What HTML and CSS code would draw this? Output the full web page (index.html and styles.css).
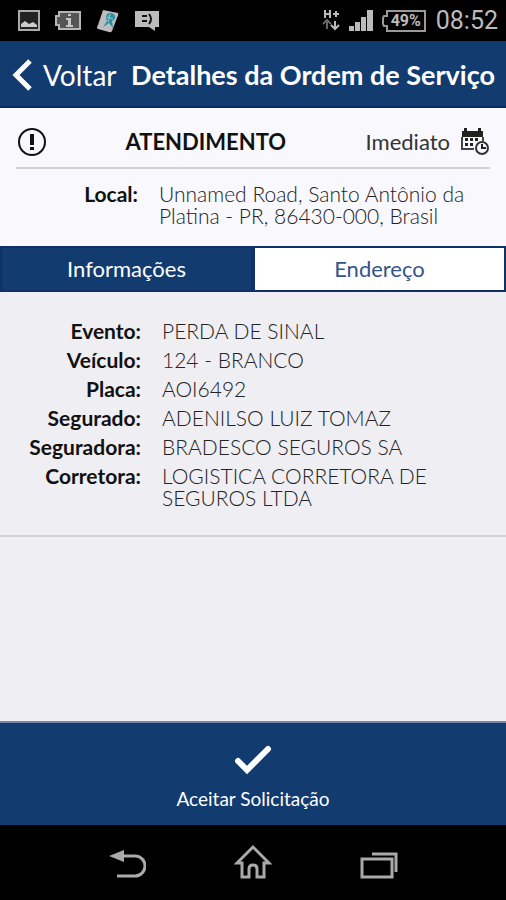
FILE: index.html
```html
<!DOCTYPE html>
<html lang="pt-BR">
<head>
    <meta charset="UTF-8">
    <meta name="viewport" content="width=device-width, initial-scale=1">
    <title>Detalhes da Ordem de Serviço</title>
    <link rel="stylesheet" href="styles.css">
</head>
<body>
    <div class="statusbar">
        <div class="notifications">
            <svg width="22" height="22" viewBox="0 0 22 22"><rect x="1" y="1" width="20" height="19" fill="#222" stroke="#aaa" stroke-width="2"/><path d="M3 17v-3l4-3 4 3 4-2 4 3v2z" fill="#ccc"/></svg>
            <svg width="28" height="22" viewBox="0 0 28 22"><path d="M5 2h21v17H5v-4H2V6h3z" fill="#555" stroke="#b5b5b5" stroke-width="2"/><path d="M14 4h3v2h-3zM12 8h5v7h2v2h-7v-2h2v-5h-2z" fill="#c4c4c4"/></svg>
            <svg width="24" height="24" viewBox="0 0 24 24"><path d="M7 1l15 3q1 2-1 5l-5 13q-1 2-3 1L2 20q-2-1 0-4z" fill="#bdbdbd"/><path d="M10 9q0-5 4-5t5 3-3 5l1 7-4-5-6 4 4-6z" fill="#2c91a5"/><path d="M11 8l6 2M14 5l-2 8" stroke="#9ccad2" fill="none"/></svg>
            <svg width="26" height="22" viewBox="0 0 26 22"><path d="M1 1h24v16h-4v4l-6-4H1z" fill="#bcbcbc"/><path d="M8 6h5M8 11h5M15 4q4 5 0 10" stroke="#111" stroke-width="2" fill="none"/></svg>
        </div>
        <div class="system">
            <svg width="20" height="24" viewBox="0 0 20 24" fill="none" stroke="#bbb" stroke-width="2"><path d="M3 1v8M8 1v8M3 5h5M11 5h6M14 2v6"/><path d="M5 20v-8M1 15l4-4 4 4" stroke="#666"/><path d="M13 12v8M9 16l4 4 4-4"/></svg>
            <svg width="26" height="24" viewBox="0 0 26 24" fill="#bbb"><path d="M1 17h5v5H1zM7 13h5v9H7zM13 8h5v14h-5zM19 1h6v21h-6z"/></svg>
            <span class="battery">
                <svg width="44" height="24" viewBox="0 0 44 24" fill="none" stroke="#999" stroke-width="2"><path d="M5 2h38v20H5v-5H2l-1-2V9l1-2h3z"/></svg>
                <span class="level">49%</span>
            </span>
            <span class="clock">08:52</span>
        </div>
    </div>

    <header class="titlebar">
        <a class="back" href="#">
            <svg width="22" height="34" viewBox="0 0 22 34" fill="none" stroke="#fff" stroke-width="5"><path d="M19 3L5 17l14 14"/></svg>
            Voltar
        </a>
        <h1>Detalhes da Ordem de Serviço</h1>
    </header>

    <main>
        <section class="summary">
            <div class="call">
                <svg width="28" height="28" viewBox="0 0 28 28"><circle cx="14" cy="14" r="13" fill="none" stroke="#111" stroke-width="2"/><path d="M12 6h4v11h-4zM12 19h4v3h-4z" fill="#111"/></svg>
                <h2>ATENDIMENTO</h2>
                <span class="when">
                    Imediato
                    <svg width="30" height="30" viewBox="0 0 30 30"><path d="M2 4h21v6H2zM4 1h3v5H4zM18 1h3v5h-3z" fill="#222"/><path d="M2 10v12h12M23 10v4" fill="none" stroke="#444" stroke-width="2"/><path d="M5 11h3v3H5zM10 11h3v3h-3zM15 11h3v3h-3zM5 16h3v3H5zM10 16h3v3h-3z" fill="#222"/><circle cx="22" cy="21" r="6" fill="#f8f8fd" stroke="#333" stroke-width="2"/><path d="M22 17v4h4" fill="none" stroke="#222" stroke-width="2"/></svg>
                </span>
            </div>
            <dl class="place">
                <dt>Local:</dt>
                <dd>Unnamed Road, Santo Antônio da Platina - PR, 86430-000, Brasil</dd>
            </dl>
        </section>

        <div class="tabs">
            <button class="tab active" type="button">Informações</button>
            <button class="tab" type="button">Endereço</button>
        </div>

        <dl class="details">
            <dt>Evento:</dt>
            <dd>PERDA DE SINAL</dd>
            <dt>Veículo:</dt>
            <dd>124 - BRANCO</dd>
            <dt>Placa:</dt>
            <dd>AOI6492</dd>
            <dt>Segurado:</dt>
            <dd>ADENILSO LUIZ TOMAZ</dd>
            <dt>Seguradora:</dt>
            <dd>BRADESCO SEGUROS SA</dd>
            <dt>Corretora:</dt>
            <dd>LOGISTICA CORRETORA DE SEGUROS LTDA</dd>
        </dl>
    </main>

    <button class="accept" type="button">
        <svg width="40" height="32" viewBox="0 0 40 32" fill="none" stroke="#fff" stroke-width="6" stroke-linecap="round"><path d="M5 17l9 9L35 5"/></svg>
        Aceitar Solicitação
    </button>

    <nav class="navbar">
        <button type="button" aria-label="Voltar">
            <svg width="38" height="36" viewBox="0 0 38 36"><path d="M14 12h13a9 9 0 0 1 0 20H9" fill="none" stroke="#aaa" stroke-width="3"/><path d="M1 12l15-6v12z" fill="#aaa"/></svg>
        </button>
        <button type="button" aria-label="Início">
            <svg width="38" height="36" viewBox="0 0 38 36" fill="none" stroke="#aaa" stroke-width="3"><path d="M19 3L3 19h5v14h7V25q0-4 4-4t4 4v8h7V19h5z"/></svg>
        </button>
        <button type="button" aria-label="Recentes">
            <svg width="38" height="36" viewBox="0 0 38 36" fill="none" stroke="#aaa" stroke-width="3"><rect x="2" y="15" width="30" height="18"/><path d="M12 10h24v18"/></svg>
        </button>
    </nav>
</body>
</html>
```

FILE: styles.css
```css
* { box-sizing: border-box; }
body { margin: 0; min-height: 100vh; display: flex; flex-direction: column; background: #efeef3; color: #111; font-family: Lato, sans-serif; font-size: 22px; line-height: 22px; }
svg { display: block; flex: none; }
h1, h2, dl, dd { margin: 0; }
button { font: inherit; border: 0; border-radius: 0; padding: 0; cursor: pointer; }

.statusbar { display: flex; justify-content: space-between; align-items: center; height: 41px; padding: 0 8px 0 18px; background: #000; color: #bbb; font-family: Roboto, sans-serif; }
.notifications { display: flex; align-items: center; gap: 14px; }
.system { display: flex; align-items: center; gap: 6px; }
.battery { display: grid; align-items: center; justify-items: center; margin-left: 2px; }
.battery > * { grid-area: 1 / 1; }
.level { padding-left: 4px; font-size: 16px; font-weight: 700; }
.clock { margin-left: 4px; font-size: 25px; }

.titlebar { display: flex; align-items: center; justify-content: space-between; height: 67px; padding: 2px 11px 0; background: #123b70; border-bottom: 2px solid #06296a; color: #fff; white-space: nowrap; }
.back { display: flex; align-items: center; gap: 10px; color: #fff; font-size: 28px; text-decoration: none; }
h1 { font-size: 27px; font-weight: 700; }

.summary { padding: 0 16px 19px; background: #f8f8fd; }
.call { display: flex; align-items: center; justify-content: space-between; height: 61px; padding: 8px 0 0 2px; border-bottom: 2px solid #d4d4d9; }
h2 { font-size: 22px; font-weight: 700; }
.when { display: flex; align-items: center; gap: 10px; color: #333; }

dl { display: grid; column-gap: 21px; color: #222; font-size: 21px; font-weight: 300; }
dt { color: #111; font-weight: 700; text-align: right; }
.place { grid-template-columns: 122px 1fr; padding-top: 14px; }

.tabs { display: grid; grid-template-columns: 1fr 1fr; }
.tab { height: 46px; border: 2px solid #10306c; background: #fff; color: #34558a; }
.tab.active { background: #123b70; color: #fff; }

.details { grid-template-columns: 125px 1fr; row-gap: 7px; padding: 28px 64px 26px 16px; border-bottom: 2px solid #d2d1d6; }

.accept { display: flex; flex-direction: column; align-items: center; gap: 12px; margin-top: auto; padding: 21px 0 15px; background: #123b70; border-top: 2px solid #7187a6; color: #fff; font-size: 19px; }

.navbar { display: flex; justify-content: center; gap: 88px; padding: 19px 0 20px; background: #000; }
.navbar button { background: none; }
```
